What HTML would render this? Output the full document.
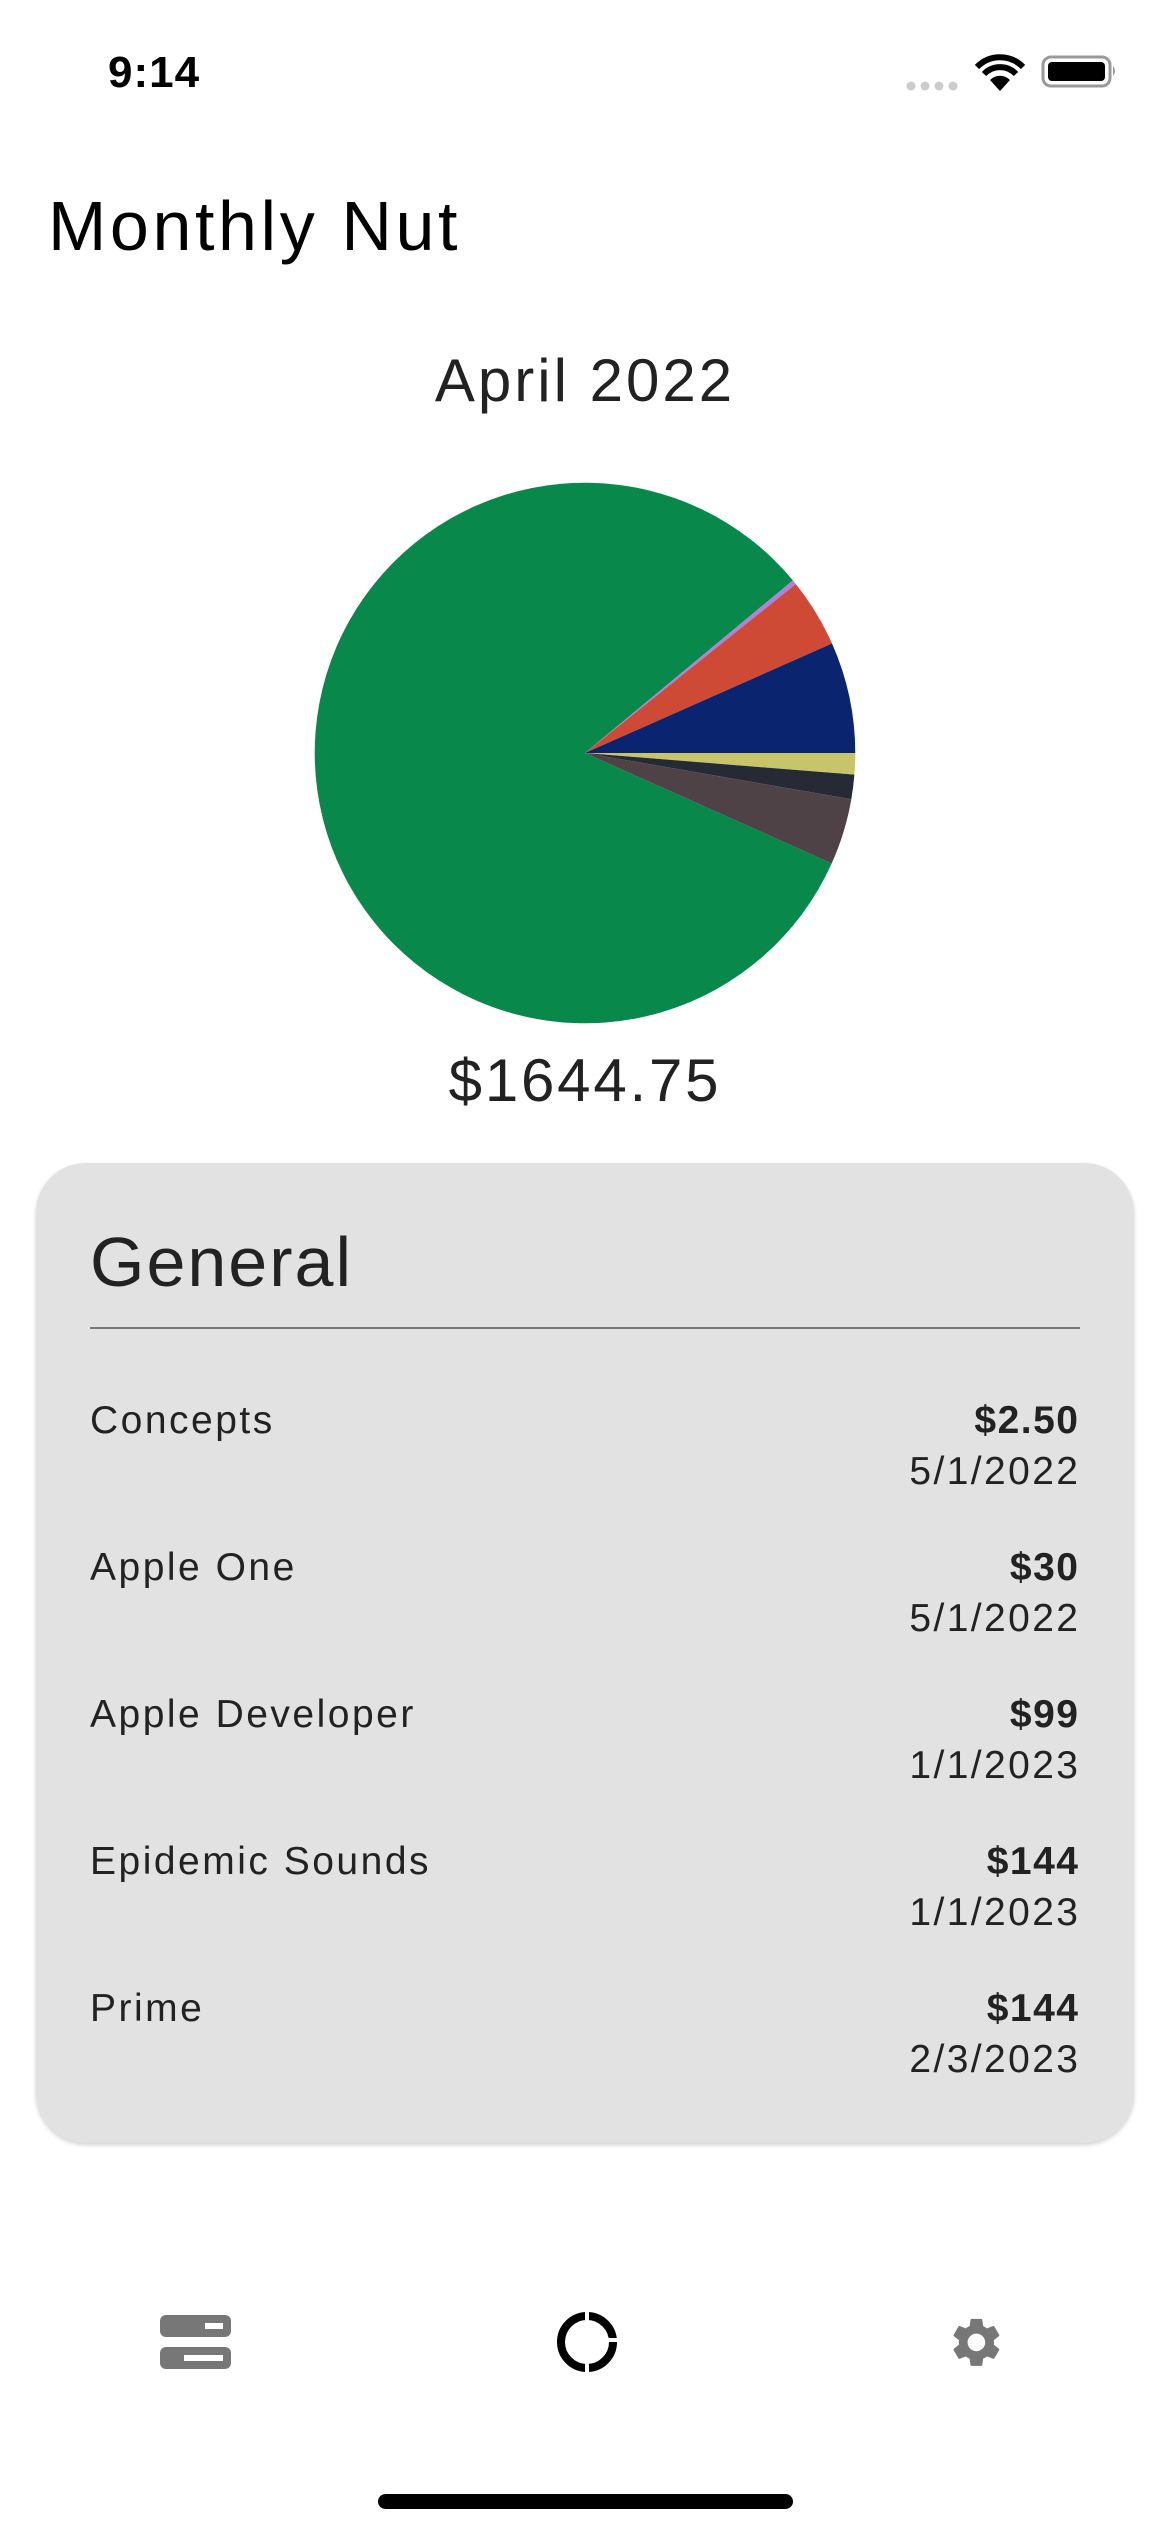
<!DOCTYPE html>
<html><head><meta charset="utf-8"><style>
html,body{margin:0;padding:0;background:#fff;}
body{width:1170px;height:2532px;position:relative;overflow:hidden;font-family:"Liberation Sans",sans-serif;color:#222;}
.abs{position:absolute;white-space:nowrap;}
.card{position:absolute;left:36px;top:1163px;width:1098px;height:980px;background:#e2e2e2;border-radius:50px;box-shadow:0 2px 4px rgba(0,0,0,0.18);}
.name{position:absolute;left:90px;font-size:39px;color:#222;letter-spacing:2.5px;}
.r{position:absolute;right:92px;font-size:39px;text-align:right;color:#222;letter-spacing:2.4px;margin-right:-2.4px;}
.b{font-weight:bold;letter-spacing:1.5px;margin-right:-1.5px;}
</style></head><body>
<div class="abs" style="left:108px;top:48px;font-size:44px;font-weight:bold;color:#000;letter-spacing:1px;">9:14</div>
<svg class="abs" style="left:900px;top:50px" width="230" height="50" viewBox="900 50 230 50">
<circle cx="911" cy="86" r="4.5" fill="#ccc"/><circle cx="925" cy="86" r="4.5" fill="#ccc"/><circle cx="939" cy="86" r="4.5" fill="#ccc"/><circle cx="953" cy="86" r="4.5" fill="#ccc"/>
<path d="M1000 91 L990 80 A14 14 0 0 1 1010 80 Z" fill="#000"/>
<path d="M984 74 A22 22 0 0 1 1016 74" stroke="#000" stroke-width="6" fill="none"/>
<path d="M977 67 A32 32 0 0 1 1023 67" stroke="#000" stroke-width="6" fill="none"/>
<rect x="1043" y="57" width="67" height="29" rx="8" fill="none" stroke="#999" stroke-width="3"/>
<rect x="1048" y="62" width="57" height="19" rx="4" fill="#000"/>
<path d="M1113 66 q4 5 0 10 Z" fill="#999"/>
</svg>
<div class="abs" style="left:48px;top:186px;font-size:70px;color:#000;letter-spacing:3.6px;">Monthly Nut</div>
<div class="abs" style="left:0;width:1170px;text-align:center;top:346px;font-size:60px;color:#222;letter-spacing:3px;">April 2022</div>
<svg class="abs" style="left:0;top:0" width="1170" height="1100">
<g transform="translate(585 753) scale(0.99) translate(-588 -756)">
<path d="M588 756 L837.2 867.5 A273 273 0 1 1 798 581.6 Z" fill="#08894b"/>
<path d="M588 756 L798 581.6 A273 273 0 0 1 801 585.4 Z" fill="#b27fdc"/>
<path d="M588 756 L801 585.4 A273 273 0 0 1 837.5 645.4 Z" fill="#cf4a35"/>
<path d="M588 756 L837.5 645.4 A273 273 0 0 1 861 756 Z" fill="#0b2470"/>
<path d="M588 756 L861 756 A273 273 0 0 1 860.1 777.9 Z" fill="#c8c46a"/>
<path d="M588 756 L860.1 777.9 A273 273 0 0 1 857 802.7 Z" fill="#252a35"/>
<path d="M588 756 L857 802.7 A273 273 0 0 1 837.2 867.5 Z" fill="#4f4246"/>
</g>
</svg>
<div class="abs" style="left:0;width:1170px;text-align:center;top:1046px;font-size:60px;color:#222;letter-spacing:2.8px;">$1644.75</div>
<div class="card"></div>
<div class="abs" style="left:90px;top:1222px;font-size:70px;color:#222;letter-spacing:2px;">General</div>
<div class="abs" style="left:90px;top:1327px;width:990px;height:2px;background:#777;"></div>

<div class="name" style="top:1399px">Concepts</div>
<div class="r b" style="top:1399px">$2.50</div>
<div class="r" style="top:1450px">5/1/2022</div>

<div class="name" style="top:1546px">Apple One</div>
<div class="r b" style="top:1546px">$30</div>
<div class="r" style="top:1597px">5/1/2022</div>

<div class="name" style="top:1693px">Apple Developer</div>
<div class="r b" style="top:1693px">$99</div>
<div class="r" style="top:1744px">1/1/2023</div>

<div class="name" style="top:1840px">Epidemic Sounds</div>
<div class="r b" style="top:1840px">$144</div>
<div class="r" style="top:1891px">1/1/2023</div>

<div class="name" style="top:1987px">Prime</div>
<div class="r b" style="top:1987px">$144</div>
<div class="r" style="top:2038px">2/3/2023</div>

<svg class="abs" style="left:0;top:2290px" width="1170" height="120" viewBox="0 2290 1170 120">
<rect x="160" y="2315" width="71" height="22" rx="6" fill="#777"/>
<rect x="205" y="2323" width="18" height="6" fill="#fff"/>
<rect x="160" y="2347" width="71" height="22" rx="6" fill="#777"/>
<rect x="184" y="2355" width="39" height="6" fill="#fff"/>
<circle cx="587" cy="2342" r="26" fill="none" stroke="#000" stroke-width="8"/>
<rect x="585" y="2308" width="4" height="14" fill="#fff"/>
<rect x="585" y="2362" width="4" height="14" fill="#fff"/>
<rect x="606" y="2338" width="16" height="4" fill="#fff"/>
<g transform="translate(947 2313) scale(2.45)" fill="#777">
<path d="M19.14 12.940c.04-.3.06-.61.06-.94 0-.32-.02-.64-.07-.94l2.030-1.580a.49.49 0 0 0 .12-.61l-1.920-3.320a.488.488 0 0 0-.59-.22l-2.390.96c-.5-.38-1.030-.7-1.620-.94l-.36-2.540a.484.484 0 0 0-.48-.41h-3.840c-.24 0-.43.17-.47.41l-.36 2.540c-.59.24-1.130.57-1.620.94l-2.390-.96c-.22-.08-.47 0-.59.22L2.740 8.870c-.12.21-.08.47.12.61l2.030 1.580c-.05.3-.09.63-.09.94s.02.64.07.94l-2.030 1.580a.49.49 0 0 0-.12.61l1.920 3.320c.12.22.37.29.59.22l2.390-.96c.5.38 1.030.7 1.620.94l.36 2.540c.05.24.24.41.48.41h3.840c.24 0 .44-.17.47-.41l.36-2.540c.59-.24 1.130-.56 1.620-.94l2.390.96c.22.08.47 0 .59-.22l1.920-3.320c.12-.22.07-.47-.12-.61l-2.010-1.580zM12 15.600c-1.980 0-3.600-1.620-3.600-3.600s1.620-3.600 3.600-3.600 3.600 1.620 3.600 3.600-1.620 3.600-3.600 3.600z"/>
</g>
</svg>
<div class="abs" style="left:378px;top:2494px;width:415px;height:15px;border-radius:8px;background:#000;"></div>
</body></html>
